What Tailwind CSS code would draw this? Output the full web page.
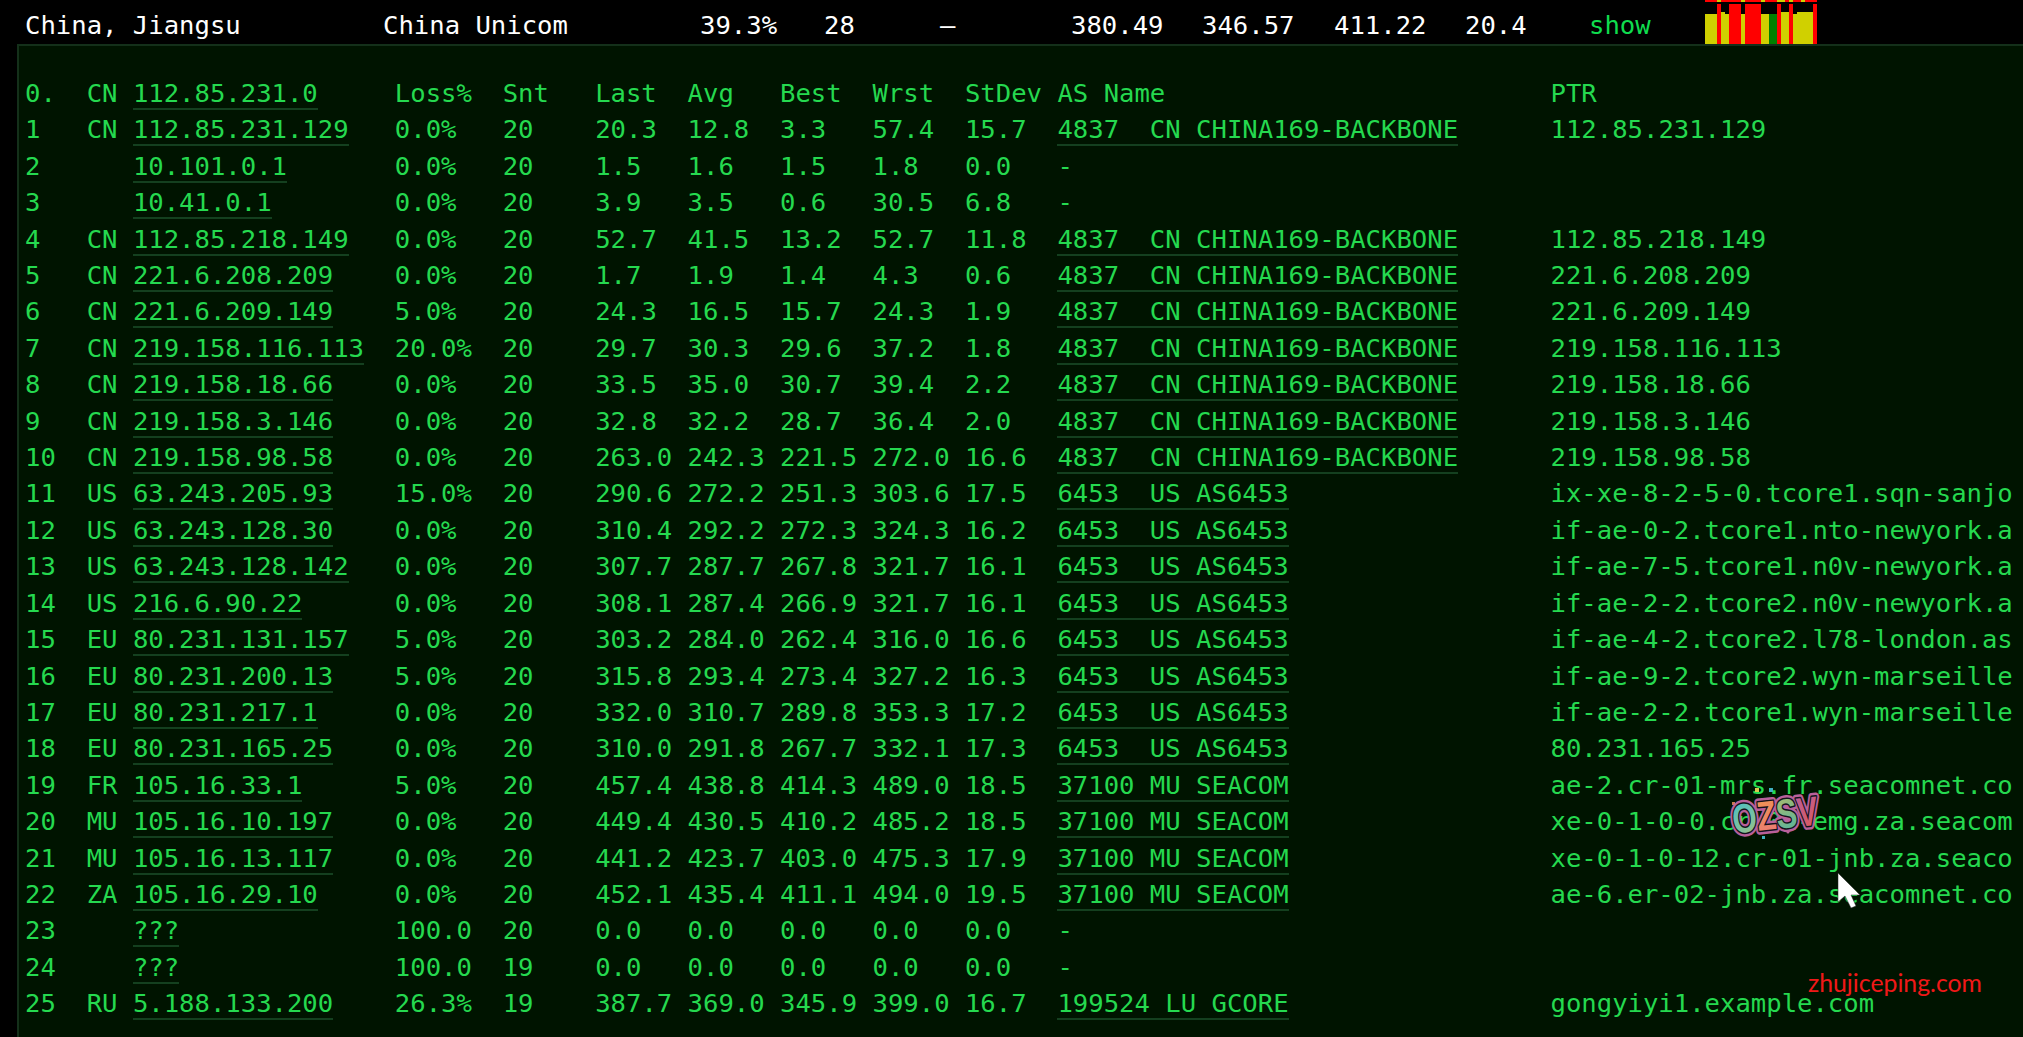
<!DOCTYPE html>
<html>
  <head>
    <title>Traceroute</title>
    <script src="https://cdn.jsdelivr.net/npm/@tailwindcss/browser@4"></script>
  </head>
  <body class="bg-black overflow-hidden">
    <div class="relative h-[1037px] w-full flex flex-col overflow-hidden font-['DejaVu_Sans_Mono',monospace] text-[25.6px]">
      <!-- summary row -->
      <div class="flex h-[44px] pl-[25px] text-white leading-[50px] shrink-0 whitespace-pre">
        <span class="w-[358px]">China, Jiangsu</span>
        <span class="w-[317px]">China Unicom</span>
        <span class="w-[124px]">39.3%</span>
        <span class="w-[116px]">28</span>
        <span class="w-[131px]">–</span>
        <span class="w-[131px]">380.49</span>
        <span class="w-[132px]">346.57</span>
        <span class="w-[131px]">411.22</span>
        <span class="w-[124px]">20.4</span>
        <span class="w-[116px] text-[#0fdc4e]">show</span>
        <div class="w-[112px] h-[44px] flex flex-col">
          <div class="h-[2px] shrink-0 flex bg-[#ff0000]">
            <i class="ml-[12px] w-[4px] bg-[#d0d000]"></i>
            <i class="ml-[20px] w-[4px] bg-[#d0d000]"></i>
            <i class="ml-[16px] w-[4px] bg-[#d0d000]"></i>
            <i class="ml-[12px] w-[8px] bg-[#d0d000]"></i>
            <i class="ml-[4px] w-[4px] bg-[#d0d000]"></i>
            <i class="ml-[8px] w-[4px] bg-[#d0d000]"></i>
          </div>
          <div class="h-[2px] shrink-0"></div>
          <div class="flex items-end flex-1">
            <i class="w-[12px] h-[30px] bg-[#d0d000]"></i>
            <i class="w-[4px] h-[40px] bg-[#ff0000]"></i>
            <i class="w-[4px] h-[32px] bg-[#d0d000]"></i>
            <i class="w-[4px] h-[30px] bg-[#d0d000]"></i>
            <i class="w-[12px] h-[40px] bg-[#ff0000]"></i>
            <i class="w-[4px] h-[30px] bg-[#d0d000]"></i>
            <i class="w-[16px] h-[40px] bg-[#ff0000]"></i>
            <i class="w-[8px] h-[30px] bg-[#d0d000]"></i>
            <i class="w-[8px] h-[30px] bg-[#008000]"></i>
            <i class="w-[4px] h-[40px] bg-[#ff0000]"></i>
            <i class="w-[8px] h-[32px] bg-[#d0d000]"></i>
            <i class="w-[4px] h-[40px] bg-[#ff0000]"></i>
            <i class="w-[4px] h-[30px] bg-[#d0d000]"></i>
            <i class="w-[16px] h-[32px] bg-[#d0d000]"></i>
            <i class="w-[4px] h-[40px] bg-[#ff0000]"></i>
          </div>
        </div>
      </div>

      <!-- mtr output -->
      <div class="flex-1 ml-[17px] border-t-2 border-l-2 border-[#14301a] bg-[#001400] pl-[6px] pt-[29px]">
        <pre id="report" class="font-['DejaVu_Sans_Mono',monospace] text-[25.6px] leading-[36.4px] text-[#25d94f] whitespace-pre"></pre>
      </div>

      <!-- stuff lying over the report -->
      <svg class="absolute left-[1722px] top-[786px]" width="106" height="60" viewBox="0 0 106 60">
        <defs>
          <linearGradient id="o" x1="0" y1="0" x2="1" y2="1">
            <stop offset="0" stop-color="#3fc0d0" /><stop offset="1" stop-color="#e0c050" />
          </linearGradient>
          <linearGradient id="z" x1="0" y1="0" x2="1" y2="1">
            <stop offset="0" stop-color="#f0a040" /><stop offset="1" stop-color="#e86a90" />
          </linearGradient>
          <linearGradient id="s" x1="0" y1="0" x2="1" y2="1">
            <stop offset="0" stop-color="#e0c050" /><stop offset="1" stop-color="#35b0b0" />
          </linearGradient>
          <linearGradient id="v" x1="0" y1="0" x2="1" y2="1">
            <stop offset="0" stop-color="#a060d0" /><stop offset="1" stop-color="#e05a50" />
          </linearGradient>
        </defs>
        <!-- drips and splatter -->
        <path d="M24 40v8M38 40v5M52 38v6M66 38v8M84 32v5" stroke="#b8609a" stroke-width="3" stroke-linecap="round" />
        <rect x="10" y="16" width="3" height="3" fill="#c87850" />
        <rect x="33" y="2" width="4" height="4" fill="#d8c850" />
        <rect x="47" y="2" width="4" height="4" fill="#40b0c0" />
        <rect x="40" y="50" width="3" height="3" fill="#40b0c0" />
        <rect x="87" y="26" width="3" height="3" fill="#d8c850" />
        <g transform="rotate(-6 53 28)" font-family="Liberation Sans" font-weight="700" font-size="41" stroke-linejoin="round">
          <text x="10" y="43" textLength="86" lengthAdjust="spacingAndGlyphs" stroke="#b8609a" stroke-width="8" fill="#b8609a">OZSV</text>
          <text x="10" y="43" textLength="86" lengthAdjust="spacingAndGlyphs" stroke="#12121c" stroke-width="3" paint-order="stroke"><tspan fill="url(#o)">O</tspan><tspan fill="url(#z)">Z</tspan><tspan fill="url(#s)">S</tspan><tspan fill="url(#v)">V</tspan></text>
        </g>
      </svg>
      <svg class="absolute left-[1837px] top-[872px]" width="26" height="38" viewBox="0 0 26 38">
        <path d="M1 1 L1 30 L8 24 L14 36 L19 34 L14 23 L23 23 Z" fill="#ffffff" stroke="#222222" stroke-width="0.5" />
      </svg>
      <span class="absolute left-[1808px] top-[968px] font-['Lato',sans-serif] text-[24.8px] leading-[30px] text-[#f01818]">zhujiceping.com</span>
    </div>

    <script>
      const CN169 = '4837  CN CHINA169-BACKBONE';
      const AS6453 = '6453  US AS6453';
      const SEACOM = '37100 MU SEACOM';
      const rows = [
        ['0.', 'CN', '112.85.231.0', 'Loss%', 'Snt', 'Last', 'Avg', 'Best', 'Wrst', 'StDev', 'AS Name', 'PTR'],
        ['1', 'CN', '112.85.231.129', '0.0%', '20', '20.3', '12.8', '3.3', '57.4', '15.7', CN169, '112.85.231.129'],
        ['2', '', '10.101.0.1', '0.0%', '20', '1.5', '1.6', '1.5', '1.8', '0.0', '-', ''],
        ['3', '', '10.41.0.1', '0.0%', '20', '3.9', '3.5', '0.6', '30.5', '6.8', '-', ''],
        ['4', 'CN', '112.85.218.149', '0.0%', '20', '52.7', '41.5', '13.2', '52.7', '11.8', CN169, '112.85.218.149'],
        ['5', 'CN', '221.6.208.209', '0.0%', '20', '1.7', '1.9', '1.4', '4.3', '0.6', CN169, '221.6.208.209'],
        ['6', 'CN', '221.6.209.149', '5.0%', '20', '24.3', '16.5', '15.7', '24.3', '1.9', CN169, '221.6.209.149'],
        ['7', 'CN', '219.158.116.113', '20.0%', '20', '29.7', '30.3', '29.6', '37.2', '1.8', CN169, '219.158.116.113'],
        ['8', 'CN', '219.158.18.66', '0.0%', '20', '33.5', '35.0', '30.7', '39.4', '2.2', CN169, '219.158.18.66'],
        ['9', 'CN', '219.158.3.146', '0.0%', '20', '32.8', '32.2', '28.7', '36.4', '2.0', CN169, '219.158.3.146'],
        ['10', 'CN', '219.158.98.58', '0.0%', '20', '263.0', '242.3', '221.5', '272.0', '16.6', CN169, '219.158.98.58'],
        ['11', 'US', '63.243.205.93', '15.0%', '20', '290.6', '272.2', '251.3', '303.6', '17.5', AS6453, 'ix-xe-8-2-5-0.tcore1.sqn-sanjo'],
        ['12', 'US', '63.243.128.30', '0.0%', '20', '310.4', '292.2', '272.3', '324.3', '16.2', AS6453, 'if-ae-0-2.tcore1.nto-newyork.a'],
        ['13', 'US', '63.243.128.142', '0.0%', '20', '307.7', '287.7', '267.8', '321.7', '16.1', AS6453, 'if-ae-7-5.tcore1.n0v-newyork.a'],
        ['14', 'US', '216.6.90.22', '0.0%', '20', '308.1', '287.4', '266.9', '321.7', '16.1', AS6453, 'if-ae-2-2.tcore2.n0v-newyork.a'],
        ['15', 'EU', '80.231.131.157', '5.0%', '20', '303.2', '284.0', '262.4', '316.0', '16.6', AS6453, 'if-ae-4-2.tcore2.l78-london.as'],
        ['16', 'EU', '80.231.200.13', '5.0%', '20', '315.8', '293.4', '273.4', '327.2', '16.3', AS6453, 'if-ae-9-2.tcore2.wyn-marseille'],
        ['17', 'EU', '80.231.217.1', '0.0%', '20', '332.0', '310.7', '289.8', '353.3', '17.2', AS6453, 'if-ae-2-2.tcore1.wyn-marseille'],
        ['18', 'EU', '80.231.165.25', '0.0%', '20', '310.0', '291.8', '267.7', '332.1', '17.3', AS6453, '80.231.165.25'],
        ['19', 'FR', '105.16.33.1', '5.0%', '20', '457.4', '438.8', '414.3', '489.0', '18.5', SEACOM, 'ae-2.cr-01-mrs.fr.seacomnet.co'],
        ['20', 'MU', '105.16.10.197', '0.0%', '20', '449.4', '430.5', '410.2', '485.2', '18.5', SEACOM, 'xe-0-1-0-0.cr-01-emg.za.seacom'],
        ['21', 'MU', '105.16.13.117', '0.0%', '20', '441.2', '423.7', '403.0', '475.3', '17.9', SEACOM, 'xe-0-1-0-12.cr-01-jnb.za.seaco'],
        ['22', 'ZA', '105.16.29.10', '0.0%', '20', '452.1', '435.4', '411.1', '494.0', '19.5', SEACOM, 'ae-6.er-02-jnb.za.seacomnet.co'],
        ['23', '', '???', '100.0', '20', '0.0', '0.0', '0.0', '0.0', '0.0', '-', ''],
        ['24', '', '???', '100.0', '19', '0.0', '0.0', '0.0', '0.0', '0.0', '-', ''],
        ['25', 'RU', '5.188.133.200', '26.3%', '19', '387.7', '369.0', '345.9', '399.0', '16.7', '199524 LU GCORE', 'gongyiyi1.example.com'],
      ];

      const link = (text) => `<a class="border-b-2 border-[#14401f]">${text}</a>`;
      const pad = (text, n) => ' '.repeat(Math.max(n - text.length, 0));

      document.getElementById('report').innerHTML = rows.map((r, i) => {
        const [hop, cc, ip, loss, snt, last, avg, best, wrst, stdev, as, ptr] = r;
        const asCell = as.includes(' ') && as !== 'AS Name' ? link(as) : as;
        return hop.padEnd(4) + cc.padEnd(3) + link(ip) + pad(ip, 17) +
          loss.padEnd(7) + snt.padEnd(6) + last.padEnd(6) + avg.padEnd(6) +
          best.padEnd(6) + wrst.padEnd(6) + stdev.padEnd(6) +
          asCell + pad(as, 32) + ptr;
      }).join('\n');
    </script>
  </body>
</html>
